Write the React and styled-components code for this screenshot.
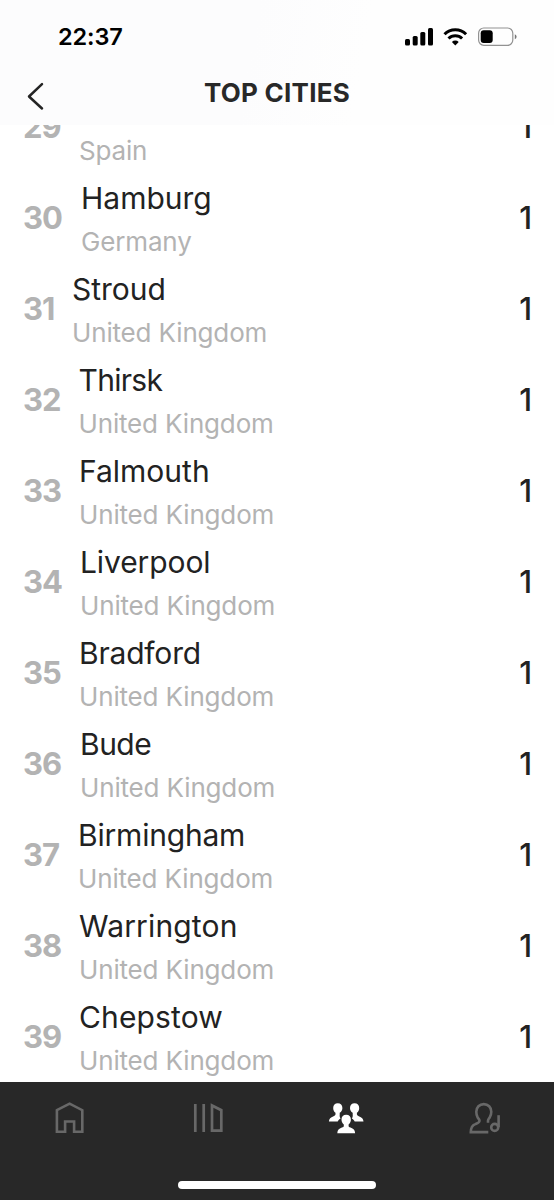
import React from "react";
import styled, { createGlobalStyle } from "styled-components";

const GlobalStyle = createGlobalStyle`
  * { box-sizing: border-box; }
  body { margin: 0; background: #fff; font-family: Inter, "Liberation Sans", sans-serif; }
`;

const Screen = styled.main`
  width: 554px;
  height: 1200px;
  display: flex;
  flex-direction: column;
  overflow: hidden;
  background: #fff;
`;

const Header = styled.header`
  flex: none;
  height: 125px;
  background: linear-gradient(100deg, #fcfcfd 45%, #fefefe 65%);
`;

const StatusBar = styled.div`
  height: 62px;
  padding: 12px 37px 0 58px;
  display: flex;
  justify-content: space-between;
`;

const Clock = styled.time`
  font-size: 23.5px;
  line-height: 50px;
  font-weight: 600;
  letter-spacing: -0.1px;
  color: #000;
`;

const StatusGlyphs = styled.svg`
  margin-top: 10px;
`;

const TitleBar = styled.div`
  height: 63px;
  display: grid;
  grid-template-columns: 80px 1fr 80px;
`;

const BackButton = styled.button`
  border: 0;
  padding: 20px 0 0 26px;
  background: none;
  display: flex;
  align-items: flex-start;
`;

const Title = styled.h1`
  margin: 0;
  text-align: center;
  font-size: 26px;
  line-height: 62px;
  font-weight: 700;
  letter-spacing: 0.25px;
  color: #282828;
`;

const ListViewport = styled.section`
  flex: none;
  height: 957px;
  overflow: hidden;
`;

const List = styled.ol`
  list-style: none;
  margin: -44px 0 0;
  padding: 0;
`;

const Row = styled.li`
  height: 91px;
  padding: 0 22px 0 23px;
  display: flex;
`;

const Rank = styled.span`
  flex: none;
  width: ${(p) => p.$width}px;
  font-size: 31px;
  line-height: 91px;
  font-weight: 700;
  letter-spacing: -1px;
  color: #b3b3b3;
`;

const Place = styled.div`
  flex: 1;
  padding-top: 6px;
  display: flex;
  flex-direction: column;
  gap: 4px;
  white-space: nowrap;
`;

const City = styled.span`
  font-size: 30px;
  line-height: 40px;
  letter-spacing: ${(p) => p.$tracking}px;
  color: #222;
`;

const Country = styled.span`
  font-size: 26px;
  line-height: 40px;
  letter-spacing: -0.16px;
  color: #b3b3b3;
`;

const Count = styled.span`
  font-size: 31px;
  line-height: 91px;
  font-weight: 450;
  color: #222;
`;

const TabBar = styled.nav`
  flex: none;
  height: 118px;
  background: #282828;
  display: flex;
  flex-direction: column;
  justify-content: space-between;
  align-items: center;
  padding-bottom: 11px;
`;

const Tabs = styled.div`
  width: 100%;
  height: 71px;
  display: grid;
  grid-template-columns: repeat(4, 1fr);
`;

const Tab = styled.button`
  border: 0;
  padding: 0;
  background: none;
  color: ${(p) => (p.$active ? "#fff" : "#686868")};
  display: flex;
  justify-content: center;
  align-items: center;
`;

const HomeIndicator = styled.div`
  width: 198px;
  height: 8px;
  border-radius: 4px;
  background: #fff;
`;

const StatusIcons = () => (
  <StatusGlyphs width="114" height="30" viewBox="403 22 114 30">
    <rect x="405" y="39" width="5" height="6.5" rx="1.5" />
    <rect x="412.7" y="36" width="5" height="9.5" rx="1.5" />
    <rect x="420.3" y="32" width="5" height="13.5" rx="1.5" />
    <rect x="428" y="28" width="5" height="17.5" rx="1.5" />
    <g fill="none" stroke="#000" strokeWidth="3">
      <path d="M444.5 34.3a15.2 15.2 0 0 1 21.6 0" />
      <path d="M448.5 38.5a9.6 9.6 0 0 1 13.6 0" />
    </g>
    <path d="M451.9 41.9a4.8 4.8 0 0 1 6.8 0L455.3 45.6Z" />
    <rect x="478.6" y="28" width="34.2" height="17.3" rx="5.2" fill="none" stroke="#929292" strokeWidth="1.2" />
    <rect x="480.7" y="30.3" width="12" height="12.8" rx="3" />
    <path d="M514.8 34.3v5q1.8-.8 1.8-2.5t-1.8-2.5" fill="#777" />
  </StatusGlyphs>
);

const BackIcon = () => (
  <svg width="20" height="30" viewBox="0 0 20 30" fill="none" stroke="#242424" strokeWidth="2.5" strokeLinecap="round" strokeLinejoin="round">
    <path d="M16 2.2 3 14.5 16 26.5" />
  </svg>
);

const HomeIcon = () => (
  <svg width="32" height="34" viewBox="-.6 0 32 34" fill="none" stroke="currentColor" strokeWidth="2.6">
    <path d="M3.3 9.2 16 2.6 28.7 9.2v21.5h-8.2V20.5h-9v10.2H3.3Z" />
  </svg>
);

const LibraryIcon = () => (
  <svg width="32" height="34" viewBox="0 0 32 34" fill="none" stroke="currentColor" strokeWidth="2.7">
    <path d="M3.3 3v28M11.7 3v28M20 4.5v25.2h9.3V9.2Z" />
  </svg>
);

const AudienceIcon = () => (
  <svg width="38" height="34" viewBox="0 0 38 34" fill="currentColor">
    <path d="M10.8 2.2c-2.8 0-4.6 2-4.6 4.7 0 2 .8 3.7 2.3 4.9v1.5c0 .9-.6 1.3-1.9 1.9C3.5 16.5 2.1 17.7 1.9 20.5h8.8c.7-1.4 1.7-2.3 2.9-3-.8-1.2-1.1-2.5-.9-4.1v-1.6c1.7-1.2 2.7-2.9 2.7-4.9 0-2.7-1.8-4.7-4.6-4.7Z" />
    <path d="M27.6 2.2c2.8 0 4.6 2 4.6 4.7 0 2-.8 3.7-2.3 4.9v1.5c0 .9.6 1.3 1.9 1.9 3.1 1.3 4.5 2.5 4.7 5.3h-8.8c-.7-1.4-1.7-2.3-2.9-3 .8-1.2 1.1-2.5.9-4.1v-1.6c-1.7-1.2-2.7-2.9-2.7-4.9 0-2.7 1.8-4.7 4.6-4.7Z" />
    <path d="M19.2 13.8c-2.9 0-4.7 2-4.7 4.7 0 2 .8 3.7 2.3 4.9v1.5c0 .9-.6 1.2-1.9 1.7-3 1.1-4.4 2.5-4.6 5.7h17.8c-.2-3.2-1.6-4.6-4.6-5.7-1.3-.5-1.9-.8-1.9-1.7v-1.5c1.5-1.2 2.3-2.9 2.3-4.9 0-2.7-1.8-4.7-4.7-4.7Z" />
  </svg>
);

const ProfileIcon = () => (
  <svg width="34" height="34" viewBox="0 0 34 34" fill="none" stroke="currentColor" strokeWidth="2.6">
    <path d="M20.3 31.1H2.8c0-5 1.4-6.8 4.5-8 2.4-1 4.2-1.4 4.2-3.4 0-1.2-1.1-2-1.9-3.4C8.7 14.8 8.3 12.9 8.3 10.8c0-4.5 3.2-7.7 7.5-7.7s7.5 3.2 7.5 7.7c0 2.3-.6 4.2-1.6 5.7-.9 1.3-1.7 2-1.7 3.2v2" />
    <circle cx="26.7" cy="26.4" r="3.5" />
    <path d="M30.6 14.2v12" />
  </svg>
);

const cities = [
  { rank: 29, city: "\u00a0", country: "Spain", offset: 56 },
  { rank: 30, city: "Hamburg", country: "Germany", offset: 58 },
  { rank: 31, city: "Stroud", country: "United Kingdom", offset: 49 },
  { rank: 32, city: "Thirsk", country: "United Kingdom", offset: 55.5, tracking: -0.7 },
  { rank: 33, city: "Falmouth", country: "United Kingdom", offset: 56 },
  { rank: 34, city: "Liverpool", country: "United Kingdom", offset: 57, tracking: -0.1 },
  { rank: 35, city: "Bradford", country: "United Kingdom", offset: 56, tracking: -0.2 },
  { rank: 36, city: "Bude", country: "United Kingdom", offset: 57, tracking: -0.5 },
  { rank: 37, city: "Birmingham", country: "United Kingdom", offset: 55, tracking: -0.2 },
  { rank: 38, city: "Warrington", country: "United Kingdom", offset: 56, tracking: 0.15 },
  { rank: 39, city: "Chepstow", country: "United Kingdom", offset: 56, tracking: 0.15 },
];

const tabs = [HomeIcon, LibraryIcon, AudienceIcon, ProfileIcon];

export default function App() {
  return (
    <Screen>
      <GlobalStyle />
      <Header>
        <StatusBar>
          <Clock>22:37</Clock>
          <StatusIcons />
        </StatusBar>
        <TitleBar>
          <BackButton aria-label="Back"><BackIcon /></BackButton>
          <Title>TOP CITIES</Title>
        </TitleBar>
      </Header>
      <ListViewport>
        <List>
          {cities.map((c) => (
            <Row key={c.rank}>
              <Rank $width={c.offset}>{c.rank}</Rank>
              <Place>
                <City $tracking={c.tracking ?? 0}>{c.city}</City>
                <Country>{c.country}</Country>
              </Place>
              <Count>1</Count>
            </Row>
          ))}
        </List>
      </ListViewport>
      <TabBar>
        <Tabs>
          {tabs.map((Icon, i) => (
            <Tab key={i} $active={i === 2}><Icon /></Tab>
          ))}
        </Tabs>
        <HomeIndicator />
      </TabBar>
    </Screen>
  );
}
